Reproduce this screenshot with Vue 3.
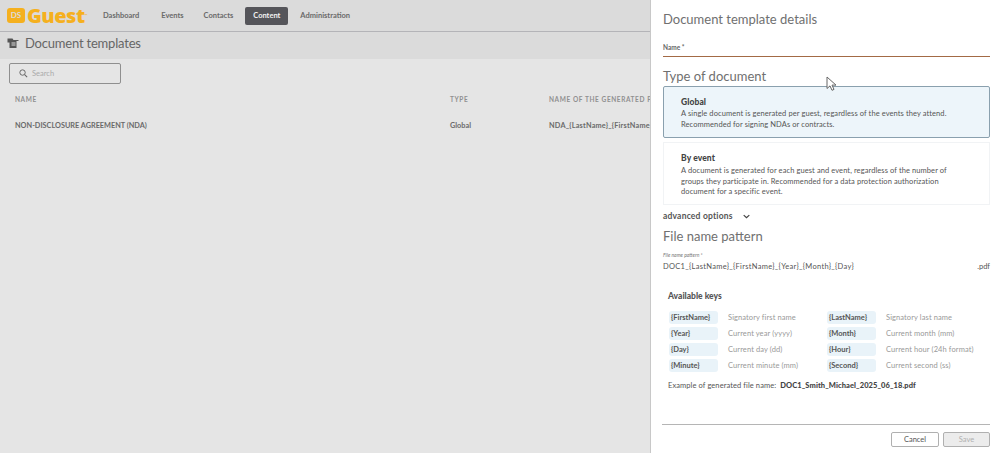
<template>
    <div class="page">
        <main class="backdrop">
            <header class="topbar">
                <div class="logo">
                    <span class="logo-mark">DS</span>
                    <span class="logo-text">Guest</span>
                    <span class="logo-tm">™</span>
                </div>
                <nav class="nav">
                    <a v-for="item in navItems" :key="item" class="nav-item" :class="{ active: item === 'Content' }">{{ item }}</a>
                </nav>
            </header>

            <div class="title-bar">
                <svg class="title-icon" viewBox="0 0 12 12" width="12" height="12">
                    <path d="M0.5 1.5h5l1 1.5h5v1h-2v7h-7v-5.5h-2z" fill="#555" />
                    <path d="M4.5 6h4M4.5 8h4" stroke="#ddd" stroke-width="1" />
                </svg>
                <h1>Document templates</h1>
            </div>

            <div class="list">
                <label class="search">
                    <svg viewBox="0 0 14 14" width="9" height="9">
                        <circle cx="5.5" cy="5.5" r="4.2" fill="none" stroke="#666" stroke-width="1.5" />
                        <path d="M8.7 8.7l4 4" stroke="#666" stroke-width="1.6" />
                    </svg>
                    <span>Search</span>
                </label>
                <div class="table-row head">
                    <span>NAME</span>
                    <span>TYPE</span>
                    <span>NAME OF THE GENERATED PDF FILE</span>
                </div>
                <div class="table-row body">
                    <span>NON-DISCLOSURE AGREEMENT (NDA)</span>
                    <span>Global</span>
                    <span class="generated">NDA_{LastName}_{FirstName}_{Year}</span>
                </div>
            </div>
        </main>

        <aside class="panel">
            <h2 class="panel-title">Document template details</h2>
            <div class="name-field">Name *</div>

            <h3 class="section-title type-title">Type of document</h3>
            <div class="cursor-wrap">
                <svg class="cursor" viewBox="0 0 12 16" width="12" height="16">
                    <path d="M1 1v11.5l3-2.6 2 4.4 2-.9-2-4.3h4z" fill="#fff" stroke="#666" stroke-width="1" />
                </svg>
            </div>
            <article class="doc-card selected">
                <strong>Global</strong>
                <p>A single document is generated per guest, regardless of the events they attend.<br>Recommended for signing NDAs or contracts.</p>
            </article>
            <article class="doc-card plain">
                <strong>By event</strong>
                <p>A document is generated for each guest and event, regardless of the number of<br>groups they participate in. Recommended for a data protection authorization<br>document for a specific event.</p>
            </article>

            <div class="advanced">
                <span>advanced options</span>
                <svg viewBox="0 0 10 6" width="7" height="5">
                    <path d="M1 1l4 3.6L9 1" fill="none" stroke="#444" stroke-width="1.8" />
                </svg>
            </div>

            <h3 class="section-title">File name pattern</h3>
            <div class="pattern-label">File name pattern *</div>
            <div class="pattern-value">
                <span class="pattern-text">DOC1_{LastName}_{FirstName}_{Year}_{Month}_{Day}</span>
                <span>.pdf</span>
            </div>

            <section class="keys">
                <h4>Available keys</h4>
                <div class="keys-grid">
                    <template v-for="k in keys" :key="k.key">
                        <span class="key">{{ k.key }}</span>
                        <span class="key-desc">{{ k.desc }}</span>
                    </template>
                </div>
                <p class="example">Example of generated file name: <b>DOC1_Smith_Michael_2025_06_18.pdf</b></p>
            </section>

            <footer class="panel-footer">
                <button class="btn">Cancel</button>
                <button class="btn disabled">Save</button>
            </footer>
        </aside>
    </div>
</template>

<script setup>
const navItems = ['Dashboard', 'Events', 'Contacts', 'Content', 'Administration'];

const keys = [
    { key: '{FirstName}', desc: 'Signatory first name' },
    { key: '{LastName}', desc: 'Signatory last name' },
    { key: '{Year}', desc: 'Current year (yyyy)' },
    { key: '{Month}', desc: 'Current month (mm)' },
    { key: '{Day}', desc: 'Current day (dd)' },
    { key: '{Hour}', desc: 'Current hour (24h format)' },
    { key: '{Minute}', desc: 'Current minute (mm)' },
    { key: '{Second}', desc: 'Current second (ss)' }
];
</script>

<style>
html, body {
    margin: 0;
    background: #fff;
    overflow: hidden;
}
</style>

<style scoped>
.page {
    display: flex;
    width: 1000px;
    height: 453px;
    overflow: hidden;
    font-family: Lato, "Noto Sans", sans-serif;
    color: #444;
}

/* ─── Backdrop ────────────────────────────────── */
.backdrop {
    width: 650px;
    flex-shrink: 0;
    background: #e5e5e5;
    overflow: hidden;
}

.topbar {
    display: flex;
    align-items: center;
    height: 31px;
    background: #dbdbdb;
    border-bottom: 1px solid #b4b4b8;
}

.logo {
    display: flex;
    align-items: center;
    width: 95px;
    padding-left: 7px;
    box-sizing: border-box;
    color: #f5b01e;
}

.logo-mark {
    width: 18px;
    height: 15px;
    margin-right: 2px;
    border-radius: 3px;
    background: #f5b01e;
    color: #dbdbdb;
    font-size: 8px;
    font-weight: 700;
    line-height: 15px;
    text-align: center;
}

.logo-text {
    font-size: 20px;
    font-weight: 800;
    line-height: 1;
    font-family: "Open Sans", sans-serif;
    letter-spacing: -0.5px;
}

.logo-tm {
    font-size: 4px;
    align-self: flex-start;
    margin-top: 7px;
}

.nav {
    display: flex;
    align-items: center;
}

.nav-item {
    height: 18px;
    padding: 0 8px;
    margin-right: 4px;
    border-radius: 2px;
    font-size: 7.5px;
    font-weight: 700;
    line-height: 18px;
    color: #6a6a6a;
}

.nav-item:first-child {
    margin-right: 6px;
}

.nav-item.active {
    background: #55555a;
    color: #f2f2f2;
}

.title-bar {
    display: flex;
    align-items: flex-start;
    height: 27px;
    padding: 2px 0 0 7px;
    box-sizing: border-box;
    background: #dbdbdb;
}

.title-icon {
    margin: 3px 6px 0 0;
}

h1 {
    margin: 0;
    font-size: 13px;
    font-weight: 400;
    line-height: 18px;
    color: #666;
    letter-spacing: -0.2px;
}

.list {
    padding: 4px 0 0;
}

.search {
    display: flex;
    align-items: center;
    gap: 4px;
    width: 101px;
    height: 19px;
    margin-left: 9px;
    padding-left: 9px;
    border: 1px solid #8f8f8f;
    border-radius: 2px;
    font-size: 7.5px;
    color: #aaa;
}

.table-row {
    display: grid;
    grid-template-columns: 435px 99px 1fr;
    padding-left: 15px;
    white-space: nowrap;
    overflow: hidden;
}

.table-row.head {
    margin-top: 11px;
    font-size: 6.5px;
    font-weight: 700;
    letter-spacing: 0.6px;
    line-height: 9px;
    color: #909090;
}

.table-row.body {
    margin-top: 17px;
    font-size: 7.3px;
    font-weight: 700;
    line-height: 10px;
    color: #6a6a6a;
}

.generated {
    letter-spacing: 0.2px;
}

/* ─── Panel ───────────────────────────────────── */
.panel {
    flex: 1;
    min-width: 0;
    box-sizing: border-box;
    padding: 11px 10px 0 12px;
    background: #fff;
    border-left: 1px solid #c8c8c8;
    display: flex;
    flex-direction: column;
}

.panel-title {
    margin: 0;
    font-size: 13px;
    font-weight: 400;
    line-height: 17px;
    color: #707070;
}

.name-field {
    margin-top: 15px;
    height: 12px;
    padding-bottom: 1px;
    border-bottom: 1px solid #a36a45;
    font-size: 6.5px;
    font-weight: 700;
    line-height: 9px;
    color: #666;
}

.section-title {
    margin: 0;
    font-size: 13px;
    font-weight: 400;
    line-height: 17px;
    color: #707070;
}

.type-title {
    margin-top: 11px;
}

.cursor-wrap {
    position: relative;
    height: 0;
}

.cursor {
    position: absolute;
    left: 163px;
    top: -9px;
    z-index: 2;
}

.doc-card {
    box-sizing: border-box;
    padding: 10px 17px 0;
    font-size: 7.5px;
    letter-spacing: 0.09px;
    line-height: 10.5px;
    color: #555;
}

.doc-card strong {
    display: block;
    font-size: 8.5px;
    font-weight: 900;
    line-height: 11px;
    margin-bottom: 1px;
    color: #444;
}

.doc-card p {
    margin: 0;
}

.doc-card.selected {
    height: 52px;
    margin-top: 1px;
    background: #edf5fa;
    border: 1px solid #8aa0ae;
    border-radius: 2px;
}

.doc-card.plain {
    height: 63px;
    margin-top: 4px;
    padding-top: 10px;
    border: 1px solid #f1f3f5;
}

.doc-card.plain strong {
    margin-bottom: 2px;
}

.advanced {
    display: flex;
    align-items: center;
    gap: 10px;
    margin-top: 5px;
    font-size: 8.5px;
    font-weight: 700;
    letter-spacing: 0.2px;
    line-height: 12px;
    color: #555;
}

.advanced + .section-title {
    margin-top: 6px;
}

.pattern-label {
    margin-top: 7px;
    font-size: 5px;
    font-style: italic;
    line-height: 7px;
    color: #777;
}

.pattern-value {
    display: flex;
    justify-content: space-between;
    margin-top: 2px;
    font-size: 7.5px;
    line-height: 11px;
    color: #555;
}

.pattern-text {
    letter-spacing: 0.3px;
}

.keys {
    margin-top: 19px;
    padding-left: 6px;
}

.keys h4 {
    margin: 0 0 9px -1px;
    font-size: 8.5px;
    font-weight: 900;
    line-height: 11px;
    color: #555;
}

.keys-grid {
    display: grid;
    grid-template-columns: 49px 89px 49px 1fr;
    column-gap: 10px;
    row-gap: 3px;
}

.key {
    height: 13px;
    padding-left: 2px;
    border-radius: 3px;
    background: #e9f3f9;
    font-size: 7.5px;
    font-weight: 700;
    line-height: 13px;
    color: #555;
    white-space: nowrap;
}

.key-desc {
    font-size: 7.5px;
    letter-spacing: 0.1px;
    line-height: 13px;
    color: #999;
    white-space: nowrap;
}

.example {
    margin: 8px 0 0 -1px;
    font-size: 7.5px;
    letter-spacing: 0.09px;
    line-height: 11px;
    color: #555;
}

.example b {
    margin-left: 2px;
    font-weight: 900;
    color: #444;
}

.panel-footer {
    display: flex;
    justify-content: flex-end;
    gap: 4px;
    margin-top: auto;
    margin-left: -1px;
    height: 29px;
    padding-top: 7px;
    box-sizing: border-box;
    border-top: 1px solid #b5b5b5;
}

.btn {
    width: 48px;
    height: 15px;
    padding: 0;
    background: #fff;
    border: 1px solid #b0b0b0;
    border-radius: 2px;
    font-family: inherit;
    font-size: 7.5px;
    font-weight: 400;
    color: #555;
}

.btn.disabled {
    width: 47px;
    background: #ececec;
    color: #b0b0b0;
}
</style>
